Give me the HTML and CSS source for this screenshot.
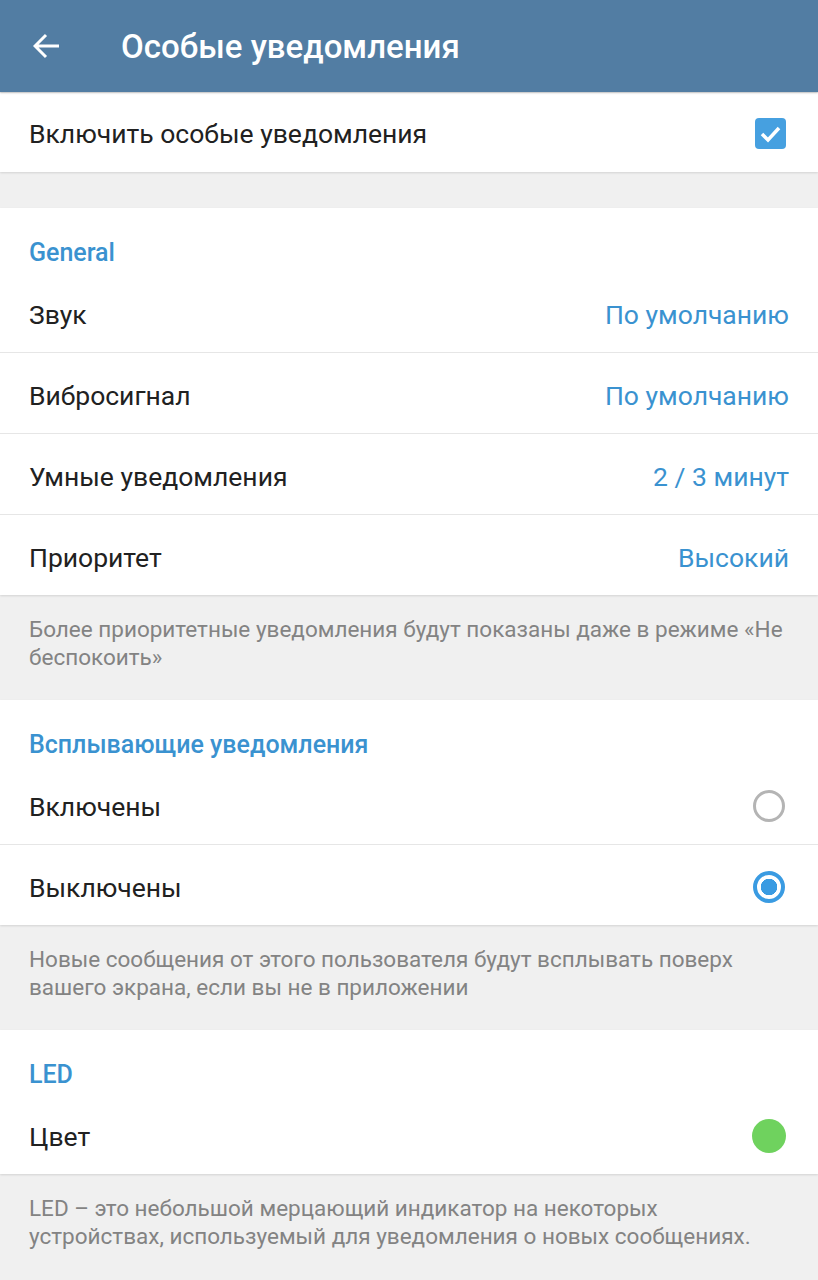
FILE: index.html
```html
<!DOCTYPE html>
<html lang="ru">
<head>
    <meta charset="UTF-8">
    <meta name="viewport" content="width=device-width, initial-scale=1.0">
    <title>Особые уведомления</title>
    <link rel="stylesheet" href="styles.css">
</head>
<body>
    <div class="toolbar">
        <svg class="back" width="28" height="26" viewBox="0 0 28 26">
            <path d="M26 13H3M13 2L2 13l11 11" fill="none" stroke="#fff" stroke-width="3"/>
        </svg>
        <h1>Особые уведомления</h1>
    </div>

    <div class="section first">
        <div class="row">
            <span>Включить особые уведомления</span>
            <svg class="check" width="31" height="31" viewBox="0 0 31 31">
                <rect width="31" height="31" rx="4" fill="#46a0e0"/>
                <path d="M7 16l6 6 11-12" fill="none" stroke="#fff" stroke-width="3.5"/>
            </svg>
        </div>
    </div>
    <div class="gap"></div>

    <div class="section">
        <div class="header">General</div>
        <div class="row line"><span>Звук</span><span class="value">По умолчанию</span></div>
        <div class="row line"><span>Вибросигнал</span><span class="value">По умолчанию</span></div>
        <div class="row line"><span>Умные уведомления</span><span class="value">2 / 3 минут</span></div>
        <div class="row"><span>Приоритет</span><span class="value">Высокий</span></div>
    </div>
    <div class="info">Более приоритетные уведомления будут показаны даже в режиме «Не беспокоить»</div>

    <div class="section">
        <div class="header">Всплывающие уведомления</div>
        <div class="row line"><span>Включены</span><span class="radio"></span></div>
        <div class="row"><span>Выключены</span><span class="radio on"></span></div>
    </div>
    <div class="info">Новые сообщения от этого пользователя будут всплывать поверх вашего экрана, если вы не в приложении</div>

    <div class="section">
        <div class="header">LED</div>
        <div class="row"><span>Цвет</span><span class="dot"></span></div>
    </div>
    <div class="info">LED – это небольшой мерцающий индикатор на некоторых устройствах, используемый для уведомления о новых сообщениях.</div>
</body>
</html>
```

FILE: styles.css
```css
body {
    margin: 0;
    font-family: Roboto, "Noto Sans", sans-serif;
    background-color: #f0f0f0;
    color: #212121;
}
.toolbar {
    height: 92px;
    background-color: #527da3;
    display: flex;
    align-items: center;
    padding-left: 33px;
    box-shadow: 0 1px 2px rgba(0, 0, 0, 0.2);
    position: relative;
}
.back {
    display: block;
}
.toolbar h1 {
    margin: 0 0 0 60px;
    font-size: 33px;
    font-weight: 500;
    color: #fff;
}
.section {
    background-color: #fff;
    box-shadow: 0 1px 2px rgba(0, 0, 0, 0.12);
}
.section.first {
    margin-top: 1px;
}
.gap {
    height: 36px;
}
.header {
    height: 64px;
    box-sizing: border-box;
    padding: 30px 29px 0;
    line-height: 30px;
    font-size: 25px;
    font-weight: 500;
    color: #3a92d0;
}
.row {
    height: 80px;
    box-sizing: border-box;
    padding: 4px 29px 0;
    display: flex;
    align-items: center;
    justify-content: space-between;
    font-size: 26.5px;
}
.line {
    height: 81px;
    border-bottom: 1px solid #e6e6e6;
}
.first .row {
    height: 79px;
    padding-top: 2px;
}
.value {
    color: #3a92d0;
}
.check {
    display: block;
    margin-right: 3px;
}
.radio {
    width: 32px;
    height: 32px;
    box-sizing: border-box;
    border: 3px solid #b4b4b4;
    border-radius: 50%;
    margin-right: 4px;
}
.radio.on {
    border: 4px solid #3a9be2;
    background: radial-gradient(circle, #3a9be2 0 8px, #fff 8.5px);
}
.dot {
    width: 34px;
    height: 34px;
    border-radius: 50%;
    background-color: #6fd25e;
    margin-right: 3px;
}
.info {
    padding: 20px 29px 29px;
    font-size: 22.5px;
    line-height: 28px;
    color: #838383;
}
```
